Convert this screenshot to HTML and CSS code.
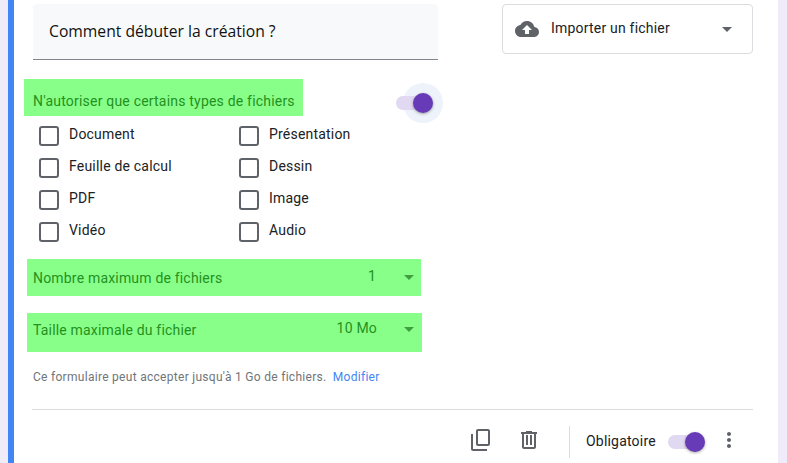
FILE: index.html
```html
<!DOCTYPE html>
<html lang="fr">
<head>
<meta charset="utf-8">
<title>Question</title>
<link rel="stylesheet" href="styles.css">
</head>
<body>
<main class="card">
  <div class="top">
    <section class="left">
      <div class="question">Comment débuter la création ?</div>
      <div class="types-row">
        <span class="hl hl-types">N'autoriser que certains types de fichiers</span>
        <span class="switch switch-halo"><span class="halo"></span><span class="track"></span><span class="thumb"></span></span>
      </div>
      <div class="checks">
        <label class="check"><span class="box"></span>Document</label>
        <label class="check"><span class="box"></span>Présentation</label>
        <label class="check"><span class="box"></span>Feuille de calcul</label>
        <label class="check"><span class="box"></span>Dessin</label>
        <label class="check"><span class="box"></span>PDF</label>
        <label class="check"><span class="box"></span>Image</label>
        <label class="check"><span class="box"></span>Vidéo</label>
        <label class="check"><span class="box"></span>Audio</label>
      </div>
      <div class="select select-count"><span class="select-label">Nombre maximum de fichiers</span><span class="select-value value-count">1</span><span class="arrow arrow-green"></span></div>
      <div class="select select-size"><span class="select-label">Taille maximale du fichier</span><span class="select-value">10 Mo</span><span class="arrow arrow-green arrow-size"></span></div>
      <p class="note">Ce formulaire peut accepter jusqu'à 1 Go de fichiers. <a class="link">Modifier</a></p>
    </section>
    <aside class="right">
      <div class="import">
        <svg class="cloud" viewBox="0 0 24 24" width="24" height="24"><path fill="#5f6368" d="M19.35 10.04C18.67 6.59 15.64 4 12 4 9.11 4 6.6 5.64 5.35 8.04 2.34 8.36 0 10.91 0 14c0 3.31 2.69 6 6 6h13c2.76 0 5-2.24 5-5 0-2.64-2.05-4.78-4.65-4.96zM14 13v4h-4v-4H7l5-5 5 5h-3z"/></svg>
        <span class="import-label">Importer un fichier</span>
        <span class="arrow arrow-grey"></span>
      </div>
    </aside>
  </div>
  <footer class="footer">
    <svg class="icon icon-copy" viewBox="0 0 24 24" width="24" height="24"><path fill="#5f6368" d="M19 1H9c-1.100 0-2 .9-2 2v13c0 1.100.9 2 2 2h10c1.100 0 2-.9 2-2V3c0-1.100-.9-2-2-2zm0 15H9V3h10v13zM2 6v15c0 1.100.9 2 2 2h14v-2H4V6H2z"/></svg>
    <svg class="icon icon-trash" viewBox="0 0 24 24" width="24" height="24"><path fill="#5f6368" d="M15 4V3H9v1H4v2h1v13c0 1.100.9 2 2 2h10c1.100 0 2-.9 2-2V6h1V4h-5zm2 15H7V6h10v13zM9 7h2v10H9V7zm4 0h2v10h-2V7z"/></svg>
    <span class="sep"></span>
    <span class="required">Obligatoire</span>
    <span class="switch switch-footer"><span class="track"></span><span class="thumb"></span></span>
    <svg class="icon icon-more" viewBox="0 0 24 24" width="24" height="24"><path fill="#5f6368" d="M12 8c1.100 0 2-.9 2-2s-.9-2-2-2-2 .9-2 2 .9 2 2 2zm0 2c-1.100 0-2 .9-2 2s.9 2 2 2 2-.9 2-2-.9-2-2-2zm0 6c-1.100 0-2 .9-2 2s.9 2 2 2 2-.9 2-2-.9-2-2-2z"/></svg>
  </footer>
</main>
</body>
</html>
```
FILE: styles.css
```css
* { box-sizing: border-box; }
html, body { margin: 0; height: 463px; overflow: hidden; }
body {
  background: #f0ebf8;
  font-family: Roboto, "Liberation Sans", sans-serif;
  color: #202124;
  font-size: 14px;
  letter-spacing: 0.2px;
}
.card {
  margin-left: 8px;
  width: 770px;
  height: 463px;
  background: #fff;
  border-left: 6px solid #4285f4;
  padding-left: 18px;
  display: flex;
  flex-direction: column;
}
.top { display: flex; height: 409px; }
.left { width: 406px; padding-top: 4px; flex: none; }
.right { padding: 4px 0 0 64px; }
.question {
  height: 56px;
  margin-left: 1px;
  width: 405px;
  background: #f8f9fa;
  border-bottom: 1px solid #80868b;
  border-radius: 4px 4px 0 0;
  padding: 0 16px;
  line-height: 54px;
  font-family: "Open Sans", sans-serif;
  font-size: 15.7px;
  letter-spacing: 0;
  color: #111;
}
.types-row { display: flex; align-items: center; margin-top: 19px; height: 37px; margin-left: -8px; }
.hl { background: #88ff88; color: #23911f; }
.hl-types { width: 279px; height: 37px; line-height: 45px; padding-left: 9px; font-size: 14px; letter-spacing: .2px; white-space: nowrap; }
.switch { position: relative; display: block; width: 36px; height: 20px; }
.switch-halo { margin-left: 93px; margin-top: 11px; }
.track { position: absolute; left: 0; top: 3px; width: 34px; height: 14px; border-radius: 7px; background: #e1d8f1; }
.thumb { position: absolute; left: 17px; top: 0; width: 20px; height: 20px; border-radius: 50%; background: #673ab7; box-shadow: 0 1px 3px rgba(0,0,0,.35); }
.halo { position: absolute; left: 7px; top: -10px; width: 40px; height: 40px; border-radius: 50%; background: #eef3fb; }
.checks { display: grid; grid-template-columns: 200px 180px; grid-auto-rows: 32px; margin: 2px 0 0 7px; }
.check { display: flex; align-items: center; gap: 10px; font-size: 14px; height: 32px; line-height: 1; }
.box { width: 20px; height: 20px; border: 2px solid #5f6368; border-radius: 3px; flex: none; position: relative; top: 2px; }
.select { display: flex; align-items: center; background: #88ff88; color: #23911f; margin-left: -5px; padding-left: 6px; font-size: 14px; }
.select-count { width: 394px; height: 37px; margin-top: 13px; }
.select-size { width: 395px; height: 39px; margin-top: 17px; padding-bottom: 6px; }
.select-label { flex: 1; letter-spacing: .185px; }
.select-value { position: relative; top: -2px; }
.arrow { display: block; width: 0; height: 0; border-left: 5px solid transparent; border-right: 5px solid transparent; flex: none; }
.arrow-green { border-top: 5px solid #3f9e3f; margin: 0 7px 0 28px; }
.arrow-size { margin-left: 27px; margin-right: 8px; }
.arrow-grey { border-top: 5px solid #5f6368; }
.note { margin: 18px 0 0 1px; font-size: 12px; color: #70757a; letter-spacing: .29px; }
.link { color: #4285f4; margin-left: 3px; }
.import { width: 251px; height: 50px; border: 1px solid #dadce0; border-radius: 4px; display: flex; align-items: center; padding: 0 20px 0 12px; }
.cloud { flex: none; }
.import-label { flex: 1; margin-left: 12px; font-size: 14px; padding-bottom: 2px; }
.footer { width: 721px; border-top: 1px solid #dadce0; display: flex; align-items: center; height: 54px; padding-top: 7px; }
.icon { flex: none; }
.icon-copy { margin-left: 437px; }
.icon-trash { margin-left: 24px; }
.sep { width: 1px; height: 32px; background: #dadce0; margin: 4px 0 0 28px; }
.required { margin: 2px 0 0 16px; }
.switch-footer { margin: 4px 0 0 12px; }
.icon-more { margin-left: 13px; }
```
